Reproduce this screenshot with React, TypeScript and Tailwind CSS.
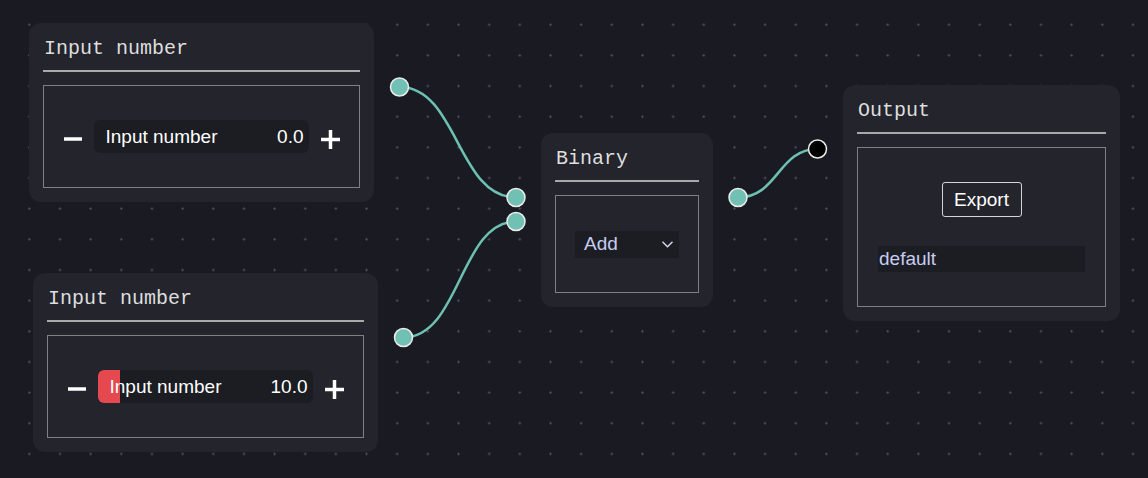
import type { ReactNode } from "react";

const mono = "font-['Liberation_Mono','Courier_New',monospace]";
const sans = "font-['Liberation_Sans',Arial,sans-serif]";

interface NodeCardProps {
  title: string;
  className: string;
  bodyClassName: string;
  children: ReactNode;
}

function NodeCard({ title, className, bodyClassName, children }: NodeCardProps) {
  return (
    <div className={`absolute rounded-[12px] bg-[#23242c] px-[14px] pt-[16px] pb-[14px] ${className}`}>
      <div className={`${mono} text-[20px] leading-[20px] text-[#dedede] pl-[1px]`}>{title}</div>
      <div className="mt-[11px] h-[2px] bg-[#a9a9a9]" />
      <div className={`mt-[13px] border border-[#808080] ${bodyClassName}`}>{children}</div>
    </div>
  );
}

function MinusIcon() {
  return (
    <svg width="18" height="20" viewBox="0 0 18 20" className="mt-[5px] shrink-0">
      <line x1="0" y1="10" x2="18" y2="10" stroke="#ffffff" strokeWidth="3.5" />
    </svg>
  );
}

function PlusIcon() {
  return (
    <svg width="19" height="19" viewBox="0 0 19 19" className="mt-[5px] shrink-0">
      <line x1="0" y1="9.5" x2="19" y2="9.5" stroke="#ffffff" strokeWidth="3.5" />
      <line x1="9.5" y1="0" x2="9.5" y2="19" stroke="#ffffff" strokeWidth="3.5" />
    </svg>
  );
}

function NumberField({ value, progress }: { value: string; progress: boolean }) {
  return (
    <div className="flex h-full items-center justify-center gap-[12px]">
      <MinusIcon />
      <div className={`${sans} relative flex h-[33px] w-[215px] items-center justify-between rounded-[6px] bg-[#1c1d22] pl-[12px] pr-[5px] pt-[2px] text-[19px] text-white`}>
        {progress && <div className="absolute left-0 top-0 h-full w-[22px] rounded-l-[6px] bg-[#e5484f]" />}
        <span className="relative">Input number</span>
        <span className="relative">{value}</span>
      </div>
      <PlusIcon />
    </div>
  );
}

// edges + handles, coordinates on the canvas
const edges = [
  "M399.5,87 C457.5,87 457.5,197.5 516,197.5",
  "M403.5,337.5 C460,337.5 460,221.5 516,221.5",
  "M738,197.5 C778,197.5 778,149 817.5,149",
];

const handles = [
  { x: 399.5, y: 87, fill: "#70c1b3" },
  { x: 516, y: 197.5, fill: "#70c1b3" },
  { x: 516, y: 221.5, fill: "#70c1b3" },
  { x: 403.5, y: 337.5, fill: "#70c1b3" },
  { x: 738, y: 197.5, fill: "#70c1b3" },
  { x: 817.5, y: 149, fill: "#000000" },
];

export default function App() {
  return (
    <div className="relative h-[478px] w-[1148px] overflow-hidden bg-[#191a22] bg-[radial-gradient(circle,#53545f_0.7px,transparent_1.5px)] bg-[length:30.67px_30.67px] bg-[position:14px_9.4px]">
      <NodeCard title="Input number" className="left-[29px] top-[23px] w-[345px]" bodyClassName="h-[103px]">
        <NumberField value="0.0" progress={false} />
      </NodeCard>

      <NodeCard title="Input number" className="left-[33px] top-[273px] w-[345px]" bodyClassName="h-[103px]">
        <NumberField value="10.0" progress={true} />
      </NodeCard>

      <NodeCard title="Binary" className="left-[541px] top-[133px] w-[172px]" bodyClassName="h-[98px] flex items-center justify-center">
        <div className={`${sans} flex h-[27px] w-[104px] items-center justify-between bg-[#1c1d22] pl-[9px] pr-[6px] pt-[1px] text-[19px] text-[#c8ccf2]`}>
          <span>Add</span>
          <svg width="11" height="7" viewBox="0 0 11 7">
            <polyline points="0.5,0.8 5.5,5.8 10.5,0.8" fill="none" stroke="#d6d9f5" strokeWidth="1.4" />
          </svg>
        </div>
      </NodeCard>

      <NodeCard title="Output" className="left-[843px] top-[85px] w-[277px]" bodyClassName="h-[160px] flex flex-col items-center justify-center gap-[29px]">
        <button className={`${sans} h-[35px] w-[80px] rounded-[3px] border border-[#d4d4d4] pt-[1px] text-[19px] text-white`}>
          Export
        </button>
        <div className={`${sans} flex h-[26px] w-[207px] items-center bg-[#1c1d22] pl-[1px] pt-[1px] text-[19px] text-[#c8ccf2]`}>
          default
        </div>
      </NodeCard>

      <svg className="pointer-events-none absolute inset-0" width="1148" height="478">
        {edges.map((d) => (
          <path key={d} d={d} fill="none" stroke="#6dc0b2" strokeWidth="2.5" />
        ))}
        {handles.map((h, i) => (
          <circle key={i} cx={h.x} cy={h.y} r="9" fill={h.fill} stroke="#ececec" strokeWidth="1.5" />
        ))}
      </svg>
    </div>
  );
}
